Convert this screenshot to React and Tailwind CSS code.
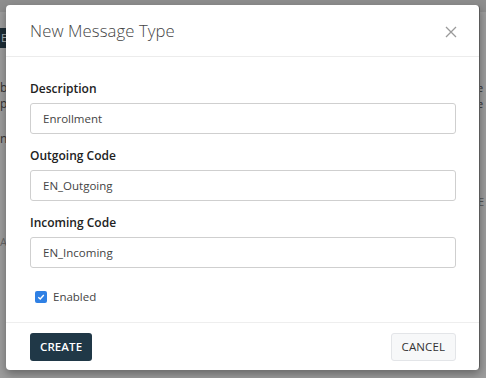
import React from "react";

function Field({ label, value }) {
  return (
    <div className="flex flex-col">
      <label className="text-[12px] font-semibold text-[#222] leading-[16px] mb-[6px]">{label}</label>
      <div className="h-[31px] rounded-[3px] border border-[#cfcfcf] bg-white flex items-center px-[12px] text-[11.5px] text-[#444]">
        {value}
      </div>
    </div>
  );
}

export default function App() {
  return (
    <div
      className="relative w-[486px] h-[378px] overflow-hidden bg-[#9d9d9d]"
      style={{ fontFamily: '"Open Sans", "Noto Sans", sans-serif' }}
    >
      {/* dimmed page beneath the overlay */}
      <div className="absolute inset-x-0 top-0 h-[12px] bg-[#8e8e8e]" />
      <div className="absolute left-0 top-[28px] w-[14px] h-[20px] bg-[#1c2c35] text-[#a9b1b5] text-[11px] leading-[20px] pl-[1px]">E</div>
      <div className="absolute left-0 top-[80px] text-[#333] text-[12px] leading-[16px]">bo<br />po</div>
      <div className="absolute left-0 top-[130px] text-[#333] text-[12px]">nu</div>
      <div className="absolute left-0 top-[234px] text-[#666] text-[11px]">AB</div>
      <div className="absolute left-[477px] top-[80px] text-[#333] text-[11px] leading-[16px]">e<br />e</div>
      <div className="absolute left-[478px] top-[194px] text-[#555] text-[11px]">E</div>

      {/* modal */}
      <div className="absolute left-[6px] top-[5px] w-[474px] h-[365px] bg-white rounded-[4px] border-r border-[#5a5a5a] shadow-[0_4px_10px_rgba(0,0,0,0.35)] flex flex-col">
        <div className="h-[52px] flex items-center justify-between pl-[24px] pr-[22px] border-b border-[#ececec]">
          <h2 className="text-[16.7px] font-light text-[#444] tracking-[0.1px]">New Message Type</h2>
          <svg width="12" height="12" viewBox="0 0 12 12" className="mt-[2px]">
            <path d="M1 1 L11 11 M11 1 L1 11" stroke="#9a9a9a" strokeWidth="1.3" />
          </svg>
        </div>
        <div className="flex-1 flex flex-col gap-[14px] pl-[24px] pr-[23px] pt-[24px]">
          <Field label="Description" value="Enrollment" />
          <Field label="Outgoing Code" value="EN_Outgoing" />
          <Field label="Incoming Code" value="EN_Incoming" />
          <div className="flex items-center gap-[6px] mt-[6px] pl-[5px]">
            <span className="w-[12px] h-[12px] rounded-[2px] bg-[#2f80e4] flex items-center justify-center">
              <svg width="8" height="8" viewBox="0 0 8 8">
                <path d="M1.3 4.2 L3.2 6 L6.8 2" stroke="white" strokeWidth="1.4" fill="none" />
              </svg>
            </span>
            <span className="text-[11.5px] text-[#444]">Enabled</span>
          </div>
        </div>
        <div className="h-[48px] border-t border-[#eeeeee] flex items-center justify-between pl-[24px] pr-[23px]">
          <button className="h-[28px] px-[10px] rounded-[3px] bg-[#203847] text-white text-[11.5px] font-semibold tracking-[0.1px]">CREATE</button>
          <button className="h-[28px] px-[10px] rounded-[3px] bg-[#f7f8f9] border border-[#e3e5e8] text-[#333] text-[11.5px] tracking-[0.1px]">CANCEL</button>
        </div>
      </div>
    </div>
  );
}
